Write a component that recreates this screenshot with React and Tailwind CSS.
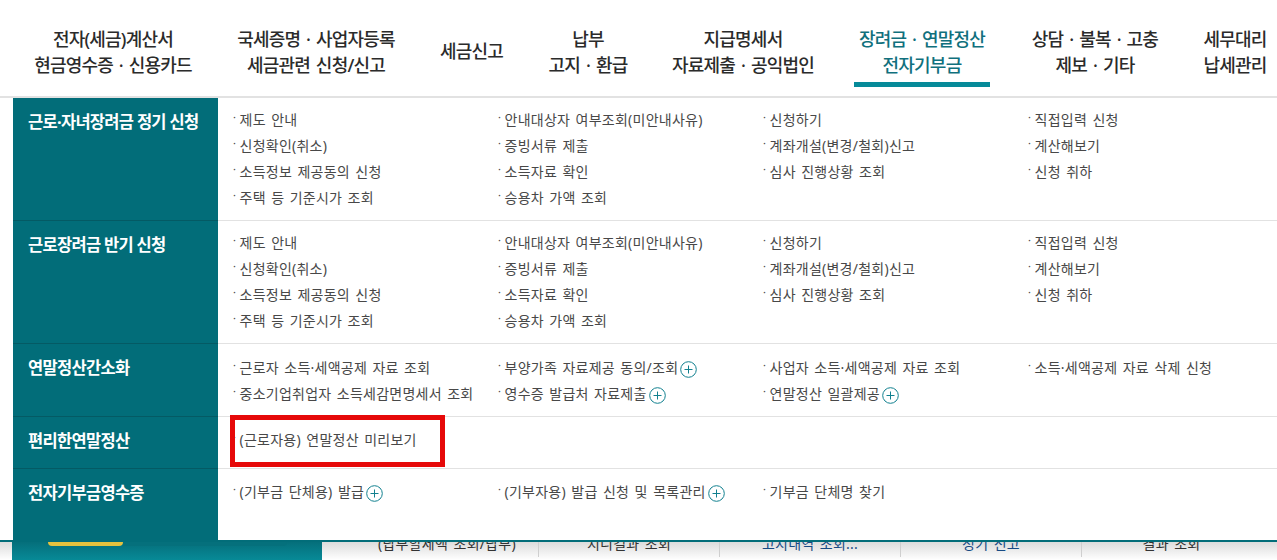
const navItems = [
  { lines: ["전자(세금)계산서", "현금영수증 · 신용카드"], w: "w-[226px]" },
  { lines: ["국세증명 · 사업자등록", "세금관련 신청/신고"], w: "w-[180px]" },
  { lines: ["세금신고"], w: "w-[131px]" },
  { lines: ["납부", "고지 · 환급"], w: "w-[102px]" },
  { lines: ["지급명세서", "자료제출 · 공익법인"], w: "w-[208px] mr-[7px]" },
  { lines: ["장려금 · 연말정산", "전자기부금"], w: "w-[136px]", active: true },
  { lines: ["상담 · 불복 · 고충", "제보 · 기타"], w: "w-[210px]" },
  { lines: ["세무대리", "납세관리"], w: "w-[70px]" },
];

const longA = [
  ["제도 안내", "안내대상자 여부조회(미안내사유)", "신청하기", "직접입력 신청"],
  ["신청확인(취소)", "증빙서류 제출", "계좌개설(변경/철회)신고", "계산해보기"],
  ["소득정보 제공동의 신청", "소득자료 확인", "심사 진행상황 조회", "신청 취하"],
  ["주택 등 기준시가 조회", "승용차 가액 조회", "", ""],
];

const rows = [
  { title: "근로·자녀장려금 정기 신청", h: "h-[123px]", pt: "pt-[8px]", items: longA },
  { title: "근로장려금 반기 신청", h: "h-[123px]", pt: "pt-[8px]", items: longA },
  {
    title: "연말정산간소화",
    h: "h-[73px]",
    pt: "pt-[10px]",
    items: [
      ["근로자 소득·세액공제 자료 조회", "부양가족 자료제공 동의/조회+", "사업자 소득·세액공제 자료 조회", "소득·세액공제 자료 삭제 신청"],
      ["중소기업취업자 소득세감면명세서 조회", "영수증 발급처 자료제출+", "연말정산 일괄제공+", ""],
    ],
  },
  { title: "편리한연말정산", h: "h-[52px]", pt: "pt-[9px]", highlight: true, items: [["(근로자용) 연말정산 미리보기", "", "", ""]] },
  {
    title: "전자기부금영수증",
    h: "h-[71px]",
    pt: "pt-[9px]",
    last: true,
    items: [["(기부금 단체용) 발급+", "(기부자용) 발급 신청 및 목록관리+", "기부금 단체명 찾기", ""]],
  },
];

function Plus() {
  return (
    <svg width="17" height="17" viewBox="0 0 17 17" className="ml-[2px] shrink-0 translate-y-[2px]">
      <circle cx="8.5" cy="8.5" r="7.8" fill="#fff" stroke="#11808f" strokeWidth="1" />
      <path d="M8.5 4.5v8M4.5 8.5h8" stroke="#11808f" strokeWidth="1" />
    </svg>
  );
}

function Item({ text }) {
  if (!text) return <div className="w-[265px] h-[26px]" />;
  const plus = text.endsWith("+");
  const label = plus ? text.slice(0, -1) : text;
  return (
    <div className="w-[265px] h-[26px] pl-[1px] flex items-center text-[14px] tracking-[0.25px] [word-spacing:1.5px] text-[#484848] whitespace-nowrap">
      <span className="w-[6.5px] text-[11px] -translate-y-[2px]">·</span>
      <span>{label}</span>
      {plus && <Plus />}
    </div>
  );
}

const cells = [
  { t: "(납부할세액 조회/납부)", w: "w-[216px] pl-[34px]", c: "text-[#333]" },
  { t: "지디걸과 조회", w: "w-[181px]", c: "text-[#333]" },
  { t: "고지내역 조회...", w: "w-[181px]", c: "text-[#174a84]" },
  { t: "정기 신고", w: "w-[181px]", c: "text-[#174a84]" },
  { t: "결과 조회", w: "w-[180px]", c: "text-[#333]" },
];

export default function App() {
  return (
    <div className="w-[1277px] h-[560px] overflow-hidden relative bg-white font-['Noto_Sans','Noto_Sans_CJK_KR',sans-serif]">
      <nav className="h-[98px] border-b-2 border-[#e2e2e2] flex items-start pt-[26px]">
        {navItems.map((n) => (
          <div
            key={n.lines[0]}
            className={`${n.w} h-[61px] flex flex-col items-center shrink-0 ${n.active ? "text-[#10707d] border-b-[5px] border-[#068a99]" : "text-[#2b2b2b]"} ${n.lines.length === 1 ? "pt-[12px]" : ""}`}
          >
            {n.lines.map((l) => (
              <div key={l} className="text-[18px] font-medium leading-[25px] h-[25px] tracking-[-0.8px] [word-spacing:2px] whitespace-nowrap first:mt-[1px] last:mt-[1px]">
                {l}
              </div>
            ))}
          </div>
        ))}
      </nav>

      <div className="ml-[13px] h-[442px] flex flex-col">
        {rows.map((r) => (
          <div key={r.title} className={`${r.h} flex shrink-0`}>
            <div className={`w-[205px] shrink-0 bg-[#026d79] pl-[15px] pt-[12px] text-white text-[16.5px] font-bold leading-[24px] tracking-[-0.7px] ${r.last ? "" : "border-b border-[#045a64]"}`}>
              {r.title}
            </div>
            <div className={`flex-1 pl-[14px] ${r.pt} relative ${r.last ? "" : "border-b border-[#e2e2e2]"}`}>
              {r.items.map((line, i) => (
                <div key={i} className="flex">
                  {line.map((t, j) => (
                    <Item key={j} text={t} />
                  ))}
                </div>
              ))}
              {r.highlight && (
                <div className="absolute left-[12px] -top-[2px] w-[215px] h-[52px] border-[5px] border-[#e60909]" />
              )}
            </div>
          </div>
        ))}
      </div>
      <div className="h-[2px] bg-[#026d79] relative z-10" />
      <div className="h-[18px] flex bg-gradient-to-b from-[#dcdcdc] to-white whitespace-nowrap overflow-hidden">
        <div className="w-[310px] ml-[12px] shrink-0 bg-gradient-to-b from-[#056f7b] to-[#078a97] relative">
          <div className="absolute left-[36px] top-0 w-[75px] h-[4px] bg-[#e5c23e] rounded-b-[10px]" />
          <div className="absolute left-[111px] top-0 w-[164px] h-[4px] bg-[#05707c] rounded-br-[10px]" />
        </div>
        <div className="flex">
          {cells.map((c, i) => (
            <div
              key={c.t}
              className={`${c.w} ${c.c} h-[15px] text-center text-[14px] tracking-[0.25px] [word-spacing:1.5px] leading-[20px] overflow-hidden ${i > 0 ? "border-l border-[#cfcfcf]" : ""}`}
            >
              <div className="-mt-[8px]">{c.t}</div>
            </div>
          ))}
        </div>
      </div>
    </div>
  );
}
